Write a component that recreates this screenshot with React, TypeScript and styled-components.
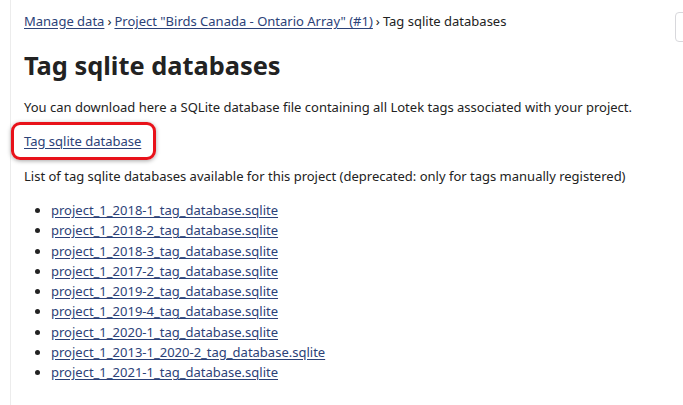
import React from "react";
import styled, { createGlobalStyle } from "styled-components";

const Global = createGlobalStyle`
  html, body { margin: 0; padding: 0; background: #fff; }
  body { font-family: "Noto Sans", "Open Sans", sans-serif; color: #222; }
`;

const Page = styled.div`
  display: flex;
  min-height: 405px;
`;

const Gutter = styled.div`
  width: 10px;
  border-right: 1px solid #ececec;
  flex: none;
`;

const Main = styled.main`
  flex: 1;
  padding: 12px 0 0 13px;
  position: relative;
`;

const Breadcrumbs = styled.nav`
  font-size: 13px;
  line-height: 18px;
  color: #222;
`;

const Link = styled.a`
  color: #2c4278;
  text-decoration: underline;
  text-underline-offset: 2px;
`;

const Sep = styled.span`
  margin: 0 3px;
`;

const Title = styled.h1`
  font-size: 25.4px;
  font-weight: 700;
  margin: 20px 0 18px;
  line-height: 30px;
  color: #222;
`;

const Para = styled.p`
  font-size: 13px;
  line-height: 18px;
  margin: 0;
`;

const Highlight = styled.div`
  display: inline-flex;
  margin: 6px 0 0 -13px;
  padding: 7px 12px 7px 10px;
  border: 3px solid #e8121a;
  border-radius: 9px;
  box-shadow: 0 1px 4px rgba(0, 0, 0, 0.35);
  font-size: 13px;
  line-height: 18px;
`;

const ListPara = styled(Para)`
  margin-top: 7px;
`;

const List = styled.ul`
  margin: 15px 0 0;
  padding-left: 27px;
  font-size: 13px;
  line-height: 20.3px;
`;

const Item = styled.li``;

const SideButton = styled.div`
  position: absolute;
  right: -10px;
  top: 12px;
  width: 16px;
  height: 28px;
  border: 1px solid #d8d8dc;
  border-radius: 4px;
`;

const files = [
  "project_1_2018-1_tag_database.sqlite",
  "project_1_2018-2_tag_database.sqlite",
  "project_1_2018-3_tag_database.sqlite",
  "project_1_2017-2_tag_database.sqlite",
  "project_1_2019-2_tag_database.sqlite",
  "project_1_2019-4_tag_database.sqlite",
  "project_1_2020-1_tag_database.sqlite",
  "project_1_2013-1_2020-2_tag_database.sqlite",
  "project_1_2021-1_tag_database.sqlite",
];

export default function App() {
  return (
    <>
      <Global />
      <Page>
        <Gutter />
        <Main>
          <SideButton />
          <Breadcrumbs>
            <Link href="#">Manage data</Link>
            <Sep>›</Sep>
            <Link href="#">Project "Birds Canada - Ontario Array" (#1)</Link>
            <Sep>›</Sep>
            Tag sqlite databases
          </Breadcrumbs>
          <Title>Tag sqlite databases</Title>
          <Para>
            You can download here a SQLite database file containing all Lotek tags associated with your project.
          </Para>
          <Highlight>
            <Link href="#">Tag sqlite database</Link>
          </Highlight>
          <ListPara>
            List of tag sqlite databases available for this project (deprecated: only for tags manually registered)
          </ListPara>
          <List>
            {files.map((f) => (
              <Item key={f}>
                <Link href="#">{f}</Link>
              </Item>
            ))}
          </List>
        </Main>
      </Page>
    </>
  );
}
